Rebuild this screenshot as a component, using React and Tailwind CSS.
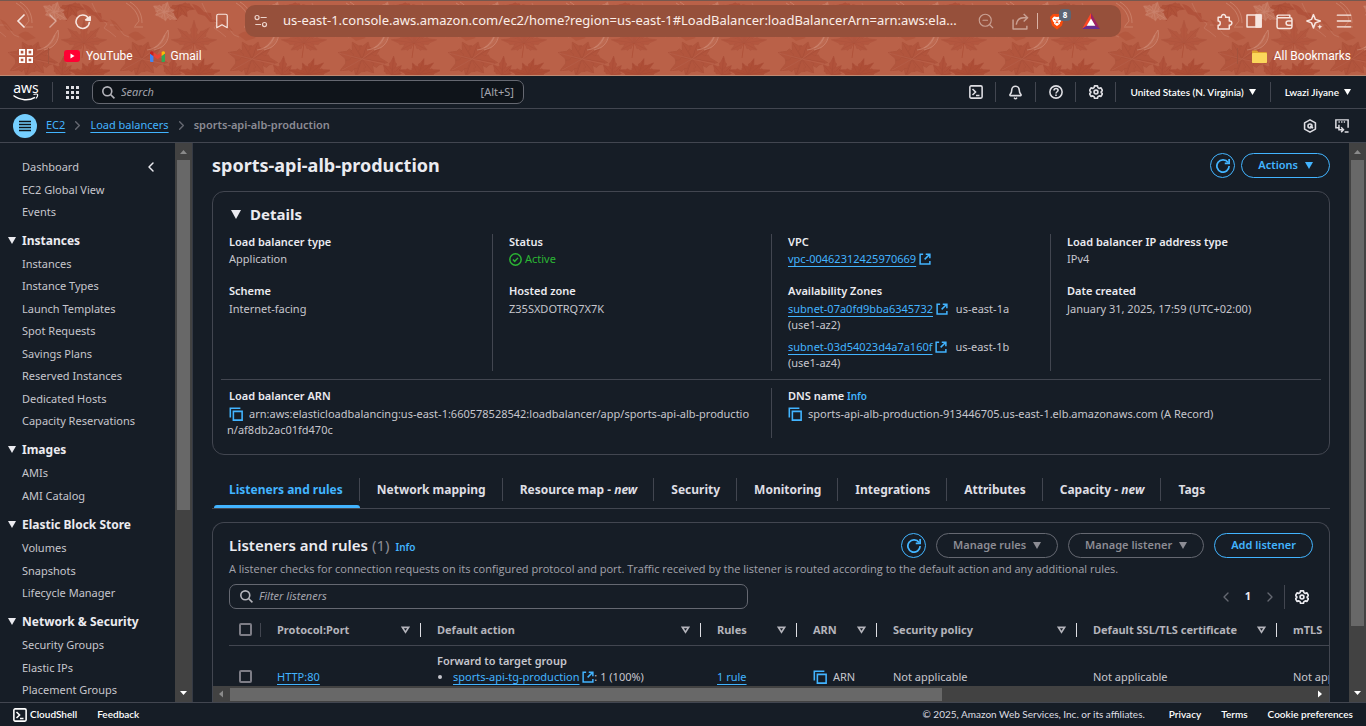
import React from "react";
import { Bell, Bookmark, ChevronLeft, ChevronRight, Menu, ZoomOut } from "lucide-react";

/* ---------- icons ---------- */

const Svg = ({ size = 14, box = 16, w = 2, className = "", children }) => (
  <svg
    width={size}
    height={size}
    viewBox={`0 0 ${box} ${box}`}
    fill="none"
    stroke="currentColor"
    strokeWidth={w}
    strokeLinejoin="round"
    className={`shrink-0 ${className}`}
    aria-hidden="true"
  >
    {children}
  </svg>
);

const RefreshIcon = () => (
  <Svg size={14} className="text-[#42b4ff]">
    <path d="M10 5h5V0" strokeLinejoin="miter" />
    <path d="M15 8a7 7 0 1 1-1.2-3.9" />
  </Svg>
);

const ExternalIcon = () => (
  <Svg size={12} className="inline-block align-[-2px] text-[#42b4ff]">
    <path d="M5.500 1.500h-4v13h13v-4" strokeLinejoin="miter" />
    <path d="M9 1.500h5.500V7M14 2 7.500 8.500" strokeLinejoin="miter" />
  </Svg>
);

const CopyIcon = () => (
  <Svg size={14} w={1.800} className="inline-block align-[-3px] text-[#42b4ff]">
    <path d="M1.500 12V1.500H13" strokeLinejoin="miter" />
    <path d="M5 5h10v10H5z" strokeLinejoin="miter" />
  </Svg>
);

const SearchIcon = () => (
  <Svg size={13} className="text-[#b4b4bb]">
    <circle cx="6.500" cy="6.500" r="5.500" />
    <path d="m10.500 10.500 4.800 4.800" />
  </Svg>
);

const GearIcon = () => (
  <Svg size={14} w={1.9}>
    <path d="M6.300 1h3.400l.5 2 1.500.9 2-.6 1.700 3-1.500 1.400v.9l1.500 1.400-1.700 3-2-.6-1.500.9-.5 1.900H6.300l-.5-1.900-1.500-.9-2 .6-1.700-3 1.500-1.400v-.9L.6 6.300l1.700-3 2 .6L5.800 3z" />
    <circle cx="8" cy="8.100" r="2.200" />
  </Svg>
);

const ShellIcon = () => (
  <Svg size={14} w={1.8}>
    <rect x="1" y="1" width="14" height="14" rx="1.500" />
    <path d="m4 4.500 3.500 3.500L4 11.500M8 12h4" strokeLinejoin="miter" />
  </Svg>
);

const HelpIcon = () => (
  <Svg size={14} w={1.8}>
    <circle cx="8" cy="8" r="7" />
    <path d="M5.700 6.300C5.800 4.800 6.800 4 8.100 4c1.300 0 2.300.8 2.300 2.100C10.400 7.600 8 7.900 8 9.700M8 10.800v1.700" />
  </Svg>
);

const HexIcon = () => (
  <Svg size={14} w={1.8}>
    <path d="M8 1 14.200 4.500v7L8 15l-6.200-3.500v-7z" />
    <circle cx="8" cy="8" r="2.300" />
    <path d="m8 8 3.500 2.500" />
  </Svg>
);

const PanelIcon = () => (
  <Svg size={14} w={1.700}>
    <path d="M5 10H1V1h14v9M4 3.500h1.500M7 3.500h1.500M10 3.500h1.500M11 14.800h4.500" strokeLinejoin="miter" />
    <path d="M4.500 6.500v5.700H9M7 9.500l2.700 2.700L7 15" strokeLinejoin="miter" />
  </Svg>
);

const CheckIcon = () => (
  <Svg size={13} w={1.800} className="text-[#2bb534]">
    <circle cx="8" cy="8" r="7" />
    <path d="m4.800 8 2.300 2.300 4-4.300" />
  </Svg>
);

const Caret = ({ className = "w-[8px] h-[7px]" }) => (
  <svg viewBox="0 0 10 8" preserveAspectRatio="none" className={`shrink-0 ${className}`} fill="currentColor" aria-hidden="true">
    <path d="M0 0h10L5 8z" />
  </svg>
);

const SortIcon = () => (
  <svg width="9" height="8" viewBox="0 0 10 9" fill="none" stroke="currentColor" strokeWidth="1.800" aria-hidden="true">
    <path d="M1.500 1.500h7L5 7z" />
  </svg>
);

const AwsLogo = () => (
  <a href="#home" aria-label="AWS home" className="flex w-[26px] flex-col items-center text-white">
    <span className="text-[14px] leading-[10px]">aws</span>
    <svg width="26" height="8" viewBox="0 0 26 8" fill="none" stroke="#fff" aria-hidden="true">
      <path d="M.5 2.500C7 7.500 16 8 22 4.300" strokeWidth="1.500" />
      <path d="M20.500 1.500c1.800-.5 3.700-.4 4 0s-.2 2.300-1.500 4" strokeWidth="1.200" />
    </svg>
  </a>
);

/* ---------- browser window ---------- */

const Lobes = ({ x, y, r, angles, width = 0.2, fill, opacity, stroke = "none" }) => (
  <g transform={`translate(${x} ${y})`} fill={fill} opacity={opacity} stroke={stroke} strokeWidth=".5">
    {angles.map(([a, k]) => {
      const l = r * k;
      const h = r * width;
      return (
        <g key={a} transform={`rotate(${a})`}>
          <path
            d={`M0 0 Q${l * 0.25} ${-h * 0.5} ${l * 0.35} ${-h} L${l * 0.45} ${-h * 0.75} L${l * 0.6} ${-h} L${l * 0.68} ${-h * 0.55} Q${l * 0.85} ${-h * 0.3} ${l} 0 Q${l * 0.85} ${h * 0.3} ${l * 0.68} ${h * 0.55} L${l * 0.6} ${h} L${l * 0.45} ${h * 0.75} L${l * 0.35} ${h} Q${l * 0.25} ${h * 0.5} 0 0z`}
          />
          <path d={`M0 0H${l * 0.9}`} fill="none" strokeWidth=".7" />
        </g>
      );
    })}
  </g>
);

const LeafBackdrop = () => (
  <svg className="absolute inset-0 h-full w-full" aria-hidden="true">
    <defs>
      <pattern id="leaves" width="110" height="76" patternUnits="userSpaceOnUse">
        <rect width="110" height="76" fill="#ba6148" />
        <Lobes x="84" y="42" r={23} width={0.16} fill="#ad4d35" opacity=".5" stroke="#a04430" angles={[[-90, 1], [-45, 0.95], [-138, 0.95], [-8, 1], [188, 1], [28, 0.65], [152, 0.65]]} />
        <path d="M84 42 82 57" stroke="#a9472f" opacity=".6" />
        <Lobes x="32" y="58" r={26} width={0.25} fill="#aa4a32" opacity=".5" stroke="#963b26" angles={[[-165, 0.95], [-120, 0.75], [-70, 0.7], [-30, 0.8], [8, 1], [50, 0.7], [110, 0.7], [152, 0.95]]} />
        <path d="M32 58 57 38M32 58 9 52M32 58 12 69M32 58l22 5" stroke="#c9765e" strokeWidth=".6" opacity=".5" />
        <Lobes x="88" y="74" r={22} width={0.15} fill="#a43e28" opacity=".55" stroke="#983522" angles={[[-70, 0.8], [-38, 0.9], [-12, 1.1], [-115, 0.6], [-165, 0.9]]} />
        <Lobes x="62" y="74" r={19} width={0.2} fill="#a8442d" opacity=".5" stroke="#983522" angles={[[-85, 1], [-45, 0.7], [-130, 0.7], [-10, 0.5]]} />
        <Lobes x="69" y="4" r={18} width={0.22} fill="#a8442d" opacity=".55" stroke="#983522" angles={[[15, 0.9], [55, 0.8], [100, 0.9], [140, 0.8]]} />
        <path d="M16 2c7 4 12 10 13 18l-4 5M20 1c7 4 12 11 12 21M24 26l9 0" fill="none" stroke="#d08d76" strokeWidth=".9" opacity=".7" />
        <Lobes x="54" y="11" r={15} width={0.25} fill="#c77c64" opacity=".6" stroke="#d79a85" angles={[[-10, 0.7], [30, 1], [80, 0.6], [-150, 0.8], [160, 0.6], [-70, 0.7]]} />
        <path d="M37 49c8-1 14-6 17-14l4-6c2 8-2 15-8 18l-6 2M44 47c6-3 9-7 11-13" fill="#c77b64" fillOpacity=".35" stroke="#d39480" strokeWidth=".8" opacity=".7" />
        <path d="M92 2c4 9 7 15 15 21l-3 4 6 4M0 31l6 5M-6 24l12 0 8 10 5 2" fill="none" stroke="#c9806a" strokeWidth=".8" opacity=".65" />
        <path d="M82 3c7 1 10 5 12 8l7 1 1 6 7 3-9 0-5-6-7-2z" fill="#a8442d" opacity=".5" />
        <path d="M0 18q6 2 8 6l5 6q-7 0-9-5zM18 34q6-5 10-3l8 6-10 3z" fill="#aa4a32" opacity=".4" />
      </pattern>
    </defs>
    <rect width="100%" height="100%" fill="url(#leaves)" />
  </svg>
);

const ToolButton = ({ label, children }) => (
  <button type="button" aria-label={label} className="flex h-6 w-[30px] items-center justify-center text-[#f7e6e0]">
    {children}
  </button>
);

const BrowserChrome = () => (
  <header className="relative border-t border-b border-t-[#75584f] border-b-[#c08a72] bg-[#ba6148] text-white">
    <LeafBackdrop />
    <div className="relative flex h-[40px] items-center pl-[7px] pr-[7px]">
      <ToolButton label="Back"><Svg size={16} w={1.6}><path d="M10.500 1.500 4 8l6.500 6.500" strokeLinejoin="miter" /></Svg></ToolButton>
      <ToolButton label="Forward"><Svg size={16} w={1.4} className="opacity-50"><path d="M5.500 1.500 12 8l-6.500 6.500" strokeLinejoin="miter" /></Svg></ToolButton>
      <ToolButton label="Reload">
        <Svg size={17} w={1.5}><path d="M14.500 8.500a6.300 6.300 0 1 1-1.200-4" /><path d="M11 6.500 15.200 7V3.500z" fill="currentColor" /></Svg>
      </ToolButton>
      <div className="flex w-[148px] justify-end pr-[14px]">
        <button type="button" aria-label="Bookmark this page" className="text-[#f7e6e0]"><Bookmark size={18} strokeWidth={1.6} /></button>
      </div>
      <div className="flex h-8 min-w-0 flex-1 items-center rounded-[10px] bg-[#96503b] pl-[9px] pr-[21px]">
        <Svg size={14} w={1.400} className="text-[#ecd3cb]"><circle cx="3.500" cy="4" r="2.300" /><path d="M7.500 4h7M1.500 12H8" /><circle cx="12" cy="12" r="2.300" /></Svg>
        <input
          aria-label="Address"
          className="ml-[15px] min-w-0 flex-1 bg-transparent text-[13px] text-[#fbeee9] outline-none"
          defaultValue="us-east-1.console.aws.amazon.com/ec2/home?region=us-east-1#LoadBalancer:loadBalancerArn=arn:aws:ela..."
        />
        <button type="button" aria-label="Zoom" className="flex w-[34px] justify-center text-[#c9a093]"><ZoomOut size={18} strokeWidth={1.5} /></button>
        <button type="button" aria-label="Share" className="flex w-[34px] justify-center text-[#c9a093]">
          <Svg size={17} w={1.4}><path d="M1 6v9h13v-3M4 11c.5-4 3-6.500 7-6.500h3.500M11 1l3.700 3.500L11 8" /></Svg>
        </button>
        <span className="h-4 w-px bg-[#d9b3a6]" />
        <button type="button" aria-label="Brave Shields, 8 blocked" className="relative ml-[11px] flex w-4">
          <svg width="16" height="17" viewBox="0 0 16 17" aria-hidden="true">
            <path d="M4 1h8l1.500 1.500L15 4l-.6 2.500L13 12.500 8 16.500 3 12.500 1.600 6.500 1 4l1.500-1.500z" fill="#fb4b0b" />
            <path d="M5 3.500 8 4l3-.5 2 2.200-1.300 3-1 .8.3 1.200L8 13l-3-2.300.3-1.200-1-.8L3 5.700z" fill="#fff" />
            <path d="m5 6.300 1.800.7M11 6.300 9.200 7M8 6.500v3M6.500 10l1.500-.6 1.500.6" stroke="#fb4b0b" fill="none" />
          </svg>
          <span className="absolute -top-[4px] left-[10px] flex h-[12px] w-[12px] items-center justify-center rounded-[4px] bg-[#5d6573] text-[8px] font-bold text-white">8</span>
        </button>
        <button type="button" aria-label="Brave Rewards" className="ml-[17px]">
          <svg width="18" height="16" viewBox="0 0 18 16" aria-hidden="true">
            <path d="M9 0v6L5 12.500 0 16z" fill="#ff4724" /><path d="M9 0v6l4 6.500L18 16z" fill="#9e1f63" /><path d="M0 16h18l-5-3.500H5z" fill="#662d91" /><path d="m9 5.500 4.300 7.200H4.700z" fill="#fff" />
          </svg>
        </button>
      </div>
      <div className="flex pl-[88px]">
        <ToolButton label="Extensions">
          <Svg size={17} w={1.400}><path d="M2 4h3.200a2 2 0 1 1 3.800 0h3.500v3.500a2 2 0 1 1 0 3.900V15H2v-3.400a2 2 0 0 0 0-4z" /></Svg>
        </ToolButton>
        <ToolButton label="Sidebar"><Svg size={16} w={1.5}><path d="M1 2h14v12H1z" /><path d="M10 2h5v12h-5z" fill="currentColor" /></Svg></ToolButton>
        <ToolButton label="Wallet"><Svg size={17} w={1.400}><path d="M1 4.500V13a1.500 1.500 0 0 0 1.500 1.500h11A1.500 1.500 0 0 0 15 13V6a1.500 1.500 0 0 0-1.500-1.500h-12C.5 3.500 1 2 2.500 2H13v2.500M15 7.500h-3.500a2 2 0 0 0 0 4H15" /></Svg></ToolButton>
        <ToolButton label="Leo AI"><Svg size={17} w={1.400}><path d="M7 1.500 8.800 6l4.700 1.500L8.800 9.300 7 14 5.200 9.300.8 7.500 5.200 6z" /><path d="m13 10.500.7 1.800 1.800.7-1.800.7-.7 1.800-.7-1.800-1.800-.7 1.800-.7z" fill="currentColor" stroke="none" /></Svg></ToolButton>
        <ToolButton label="Menu"><Menu size={20} strokeWidth={1.600} /></ToolButton>
      </div>
    </div>
    <nav aria-label="Bookmarks" className="relative flex h-[34px] items-center pb-1 pl-[19px] pr-[15px] font-['Roboto','Open_Sans',sans-serif] text-[12px] leading-4">
      <button type="button" aria-label="Tab groups">
        <Svg size={14} w={2}><path d="M1 1h5v5H1zM10 1h5v5h-5zM1 10h5v5H1zM10 10h5v5h-5z" strokeLinejoin="miter" /></Svg>
      </button>
      <span className="ml-[15px] h-4 w-px bg-[#a4533d]" />
      <a href="#youtube" className="ml-[15px] flex items-center gap-[6px]">
        <svg width="16" height="12" viewBox="0 0 16 12" aria-hidden="true"><rect width="16" height="12" rx="3" fill="#ff0033" /><path d="m6.500 3.500 4 2.500-4 2.500z" fill="#fff" /></svg>
        YouTube
      </a>
      <a href="#gmail" className="ml-[17px] flex items-center gap-[6px]">
        <svg width="15" height="11" viewBox="0 0 15 11" aria-hidden="true">
          <path d="M0 2.500 3.400 5v6H1a1 1 0 0 1-1-1z" fill="#4285f4" />
          <path d="M15 2.500 11.600 5v6H14a1 1 0 0 0 1-1z" fill="#34a853" />
          <path d="M3.400 1 7.500 4.200 11.600 1v4L7.500 8.200 3.400 5z" fill="#ea4335" />
          <path d="M11.600 1C13-.5 15 0 15 2v.5L11.600 5z" fill="#fbbc04" />
          <path d="M3.400 1C2-.5 0 0 0 2v.5L3.400 5z" fill="#c5221f" />
        </svg>
        Gmail
      </a>
      <span className="ml-auto h-4 w-px bg-[#a4533d]" />
      <a href="#bookmarks" className="ml-[14px] flex items-center gap-[7px]">
        <svg width="15" height="13" viewBox="0 0 15 13" aria-hidden="true"><path d="M0 1.500A1 1 0 0 1 1 .5h4L6.500 2H14a1 1 0 0 1 1 1v9a1 1 0 0 1-1 1H1a1 1 0 0 1-1-1z" fill="#e0a52e" /><path d="M0 4a1 1 0 0 1 1-1h13a1 1 0 0 1 1 1v8a1 1 0 0 1-1 1H1a1 1 0 0 1-1-1z" fill="#fbd75b" /></svg>
        All Bookmarks
      </a>
    </nav>
  </header>
);

/* ---------- console chrome ---------- */

const NavIcon = ({ label, children }) => (
  <button type="button" aria-label={label} className="flex h-5 w-10 items-center justify-center border-r border-[#424650] text-[#dedee3]">
    {children}
  </button>
);

const ConsoleNav = () => (
  <div className="flex h-[33px] shrink-0 items-center border-b border-[#424650] pl-[13px] pr-[15px]">
    <AwsLogo />
    <span className="ml-[13px] h-5 w-px bg-[#424650]" />
    <button type="button" aria-label="Services" className="ml-[13px] text-[#dedee3]">
      <svg width="13" height="13" viewBox="0 0 13 13" fill="currentColor" aria-hidden="true"><path d="M0 0h3v3H0zM5 0h3v3H5zM10 0h3v3h-3zM0 5h3v3H0zM5 5h3v3H5zM10 5h3v3h-3zM0 10h3v3H0zM5 10h3v3H5zM10 10h3v3h-3z" /></svg>
    </button>
    <label className="ml-[13px] flex h-6 w-[432px] items-center rounded-[7px] border border-[#656871] bg-[#0f141a] px-[9px]">
      <SearchIcon />
      <input aria-label="Search" placeholder="Search" className="ml-[6px] min-w-0 flex-1 bg-transparent text-[11px] text-[#dedee3] outline-none placeholder:italic placeholder:text-[#a4a4ad]" />
      <span className="text-[11px] text-[#a4a4ad]">[Alt+S]</span>
    </label>
    <div className="ml-auto flex items-center font-['Lato','Open_Sans',sans-serif] text-[10px] font-semibold text-white">
      <NavIcon label="CloudShell"><ShellIcon /></NavIcon>
      <NavIcon label="Notifications"><Bell size={15} strokeWidth={2.500} /></NavIcon>
      <NavIcon label="Support"><HelpIcon /></NavIcon>
      <NavIcon label="Settings"><GearIcon /></NavIcon>
      <button type="button" className="flex h-5 items-center gap-[5px] border-r border-[#424650] px-[14px]">
        United States (N. Virginia) <Caret className="h-[6px] w-[7px]" />
      </button>
      <button type="button" className="flex h-5 items-center gap-[5px] pl-[14px]">
        Lwazi Jiyane <Caret className="h-[6px] w-[7px]" />
      </button>
    </div>
  </div>
);

const LINK = "text-[#42b4ff] underline underline-offset-[3px]";

const Breadcrumbs = () => (
  <div className="flex h-[34px] shrink-0 items-center border-b border-[#424650] pl-[13px] pr-[17px] text-[11px]">
    <button type="button" aria-label="Open navigation" className="flex h-6 w-6 items-center justify-center rounded-full bg-[#75cfff] text-[#0f141a]">
      <Svg size={12} box={12} w={1.500}><path d="M0 1.500h12M0 4.500h12M0 7.500h12M0 10.500h12" /></Svg>
    </button>
    <nav aria-label="Breadcrumb" className="ml-[9px] flex items-center gap-[5px]">
      <a href="#ec2" className={LINK}>EC2</a>
      <ChevronRight size={15} strokeWidth={2.200} className="text-[#656871]" />
      <a href="#load-balancers" className={LINK}>Load balancers</a>
      <ChevronRight size={15} strokeWidth={2.200} className="text-[#656871]" />
      <span className="font-semibold text-[#8c8c94]">sports-api-alb-production</span>
    </nav>
    <div className="ml-auto flex items-center gap-[18px] text-[#dedee3]">
      <button type="button" aria-label="Resource explorer"><HexIcon /></button>
      <button type="button" aria-label="Split panel"><PanelIcon /></button>
    </div>
  </div>
);

const MENU = [
  { title: "Instances", items: ["Instances", "Instance Types", "Launch Templates", "Spot Requests", "Savings Plans", "Reserved Instances", "Dedicated Hosts", "Capacity Reservations"], height: "h-[179px]" },
  { title: "Images", items: ["AMIs", "AMI Catalog"], height: "h-[45px]" },
  { title: "Elastic Block Store", items: ["Volumes", "Snapshots", "Lifecycle Manager"], height: "h-[67px]" },
  { title: "Network & Security", items: ["Security Groups", "Elastic IPs", "Placement Groups"], height: "h-[67px]" },
];

const MenuList = ({ items, height }) => (
  <ul className={`flex flex-col justify-between pl-[22px] text-[11px] leading-[22px] text-[#c6c6cd] ${height}`}>
    {items.map((item) => (
      <li key={item}><a href={`#${item}`}>{item}</a></li>
    ))}
  </ul>
);

const VScroll = ({ className = "", thumb }) => (
  <div className={`flex w-[17px] shrink-0 flex-col items-center bg-[#424242] ${className}`} aria-hidden="true">
    <svg width="17" height="17" viewBox="0 0 17 17" className="shrink-0"><path d="M5 11h7L8.500 7z" fill="#8a8a8a" /></svg>
    <div className={`w-[13px] bg-[#686868] ${thumb}`} />
    <svg width="17" height="17" viewBox="0 0 17 17" className="mt-auto shrink-0"><path d="M5 6h7l-3.500 4z" fill="#fff" /></svg>
  </div>
);

const Sidebar = () => (
  <aside className="flex w-[193px] shrink-0 border-r border-[#353a44]">
    <nav aria-label="EC2" className="flex min-w-0 flex-1 flex-col gap-[5px] overflow-hidden pt-[13px]">
      <div className="flex items-start justify-between">
        <MenuList items={["Dashboard", "EC2 Global View", "Events"]} height="h-[67px]" />
        <button type="button" aria-label="Collapse navigation" className="mr-4 mt-[3px] text-[#ebebf0]"><ChevronLeft size={16} strokeWidth={2.200} /></button>
      </div>
      {MENU.map(({ title, items, height }) => (
        <section key={title}>
          <h3>
            <button type="button" className="flex h-[25px] items-center gap-[6px] pl-2 text-[12px] font-bold text-[#ebebf0]">
              <Caret />
              {title}
            </button>
          </h3>
          <MenuList items={items} height={height} />
        </section>
      ))}
    </nav>
    <VScroll thumb="h-[350px]" />
  </aside>
);

/* ---------- details ---------- */

const Pill = ({ muted, children }) => (
  <button
    type="button"
    disabled={muted}
    className={`flex h-[25px] items-center gap-[7px] rounded-full border px-4 text-[11px] font-semibold ${muted ? "border-[#656871] text-[#8c8c94]" : "border-[#42b4ff] text-[#42b4ff]"}`}
  >
    {children}
  </button>
);

const RoundRefresh = () => (
  <button type="button" aria-label="Refresh" className="flex h-[25px] w-[25px] items-center justify-center rounded-full border border-[#42b4ff]">
    <RefreshIcon />
  </button>
);

const Field = ({ label, tight, children }) => (
  <div>
    <dt className="font-semibold text-[#ebebf0]">{label}</dt>
    <dd className={tight ? "mt-px mb-px" : "mt-[2px]"}>{children}</dd>
  </div>
);

const Column = ({ first, children }) => (
  <dl className={`flex flex-col gap-[15px] px-4 ${first ? "" : "border-l border-[#424650]"}`}>{children}</dl>
);

const Details = () => (
  <section className="mt-[13px] shrink-0 rounded-xl border border-[#424650] pb-4">
    <button type="button" className="flex h-[42px] items-center gap-[9px] pl-[18px] pt-[3px] text-[15px] font-bold text-[#ebebf0]">
      <Caret className="h-[9px] w-[10px]" /> Details
    </button>
    <div className="grid grid-cols-4 text-[11px] leading-4 text-[#c6c6cd]">
      <Column first>
        <Field tight label="Load balancer type">Application</Field>
        <Field label="Scheme">Internet-facing</Field>
      </Column>
      <Column>
        <Field tight label="Status"><span className="flex items-center gap-[3px] text-[#2bb534]"><CheckIcon />Active</span></Field>
        <Field label="Hosted zone">Z35SXDOTRQ7X7K</Field>
      </Column>
      <Column>
        <Field tight label="VPC"><a href="#vpc" className={LINK}>vpc-00462312425970669</a> <ExternalIcon /></Field>
        <Field label="Availability Zones">
          <p><a href="#subnet-a" className={LINK}>subnet-07a0fd9bba6345732</a> <ExternalIcon /><span className="ml-2">us-east-1a</span><br />(use1-az2)</p>
          <p className="mt-[6px]"><a href="#subnet-b" className={LINK}>subnet-03d54023d4a7a160f</a> <ExternalIcon /><span className="ml-2">us-east-1b</span><br />(use1-az4)</p>
        </Field>
      </Column>
      <Column>
        <Field tight label="Load balancer IP address type">IPv4</Field>
        <Field label="Date created">January 31, 2025, 17:59 (UTC+02:00)</Field>
      </Column>
    </div>
    <hr className="mx-2 my-2 border-[#424650]" />
    <div className="grid grid-cols-2 text-[11px] leading-4 text-[#c6c6cd]">
      <Column first>
        <Field label="Load balancer ARN">
          <span className="-ml-[2px] block break-all"><span className="ml-[2px] mr-[6px]"><CopyIcon /></span>arn:aws:elasticloadbalancing:us-east-1:660578528542:loadbalancer/app/sports-api-alb-production/af8db2ac01fd470c</span>
        </Field>
      </Column>
      <Column>
        <Field label={<>DNS name <a href="#info" className="text-[10px] text-[#42b4ff]">Info</a></>}>
          <span className="mr-[6px]"><CopyIcon /></span>sports-api-alb-production-913446705.us-east-1.elb.amazonaws.com (A Record)
        </Field>
      </Column>
    </div>
  </section>
);

/* ---------- tabs and listeners ---------- */

const TABS = ["Listeners and rules", "Network mapping", ["Resource map - ", "new"], "Security", "Monitoring", "Integrations", "Attributes", ["Capacity - ", "new"], "Tags"];

const Tabs = () => (
  <div role="tablist" className="mt-[17px] flex h-[37px] shrink-0 border-b border-[#424650] text-[12px] font-bold text-[#dedee3]">
    {TABS.map((tab, i) => (
      <button
        key={i}
        type="button"
        role="tab"
        aria-selected={i === 0}
        className={`flex flex-col ${i === 0 ? "text-[#42b4ff]" : ""}`}
      >
        <span className={`mt-[6px] flex h-[23px] items-center whitespace-pre border-[#424650] pl-[17px] pr-4 ${i < TABS.length - 1 ? "border-r" : ""}`}>
          {Array.isArray(tab) ? <>{tab[0]}<em>{tab[1]}</em></> : tab}
        </span>
        {i === 0 && <span className="mt-auto ml-[2px] h-[3px] self-stretch rounded-t bg-[#42b4ff]" />}
      </button>
    ))}
  </div>
);

const COLUMNS = [
  ["Protocol:Port", "w-[160px]"],
  ["Default action", "w-[280px]"],
  ["Rules", "w-[96px]"],
  ["ARN", "w-[80px]"],
  ["Security policy", "w-[200px]"],
  ["Default SSL/TLS certificate", "w-[200px]"],
  ["mTLS", "w-[120px]"],
];

const Check = ({ label }) => (
  <input type="checkbox" aria-label={label} className="block h-[13px] w-[13px] appearance-none rounded-[2px] border-2 border-[#7d7d86]" />
);

const ListenerTable = () => (
  <table className="ml-4 mt-[6px] w-[1168px] table-fixed border-collapse text-left text-[11px] leading-4 text-[#c6c6cd]">
    <thead>
      <tr className="h-[30px] border-b border-[#424650] text-[#b4b4bb]">
        <th className="w-[32px] p-0">
          <div className="flex h-[14px] items-center border-r border-[#424650] pl-[10px]"><Check label="Select all listeners" /></div>
        </th>
        {COLUMNS.map(([name, width]) => (
          <th key={name} className={`p-0 font-bold ${width}`}>
            <div className="flex h-[14px] items-center justify-between whitespace-nowrap border-r border-[#dedee3] pl-4 pr-[10px]">
              {name} <SortIcon />
            </div>
          </th>
        ))}
      </tr>
    </thead>
    <tbody>
      <tr className="align-bottom">
        <td className="p-0 pb-[2px] pl-[10px]"><Check label="Select HTTP:80" /></td>
        <td className="pl-4"><a href="#http" className={LINK}>HTTP:80</a></td>
        <td className="whitespace-nowrap pl-4 pt-[7px]">
          <div className="font-semibold">Forward to target group</div>
          <ul className="list-disc pl-4"><li><a href="#target-group" className={LINK}>sports-api-tg-production</a> <ExternalIcon />: 1 (100%)</li></ul>
        </td>
        <td className="pl-4"><a href="#rules" className={LINK}>1 rule</a></td>
        <td className="whitespace-nowrap pl-4"><button type="button" className="flex items-center gap-[6px]"><CopyIcon />ARN</button></td>
        <td className="pl-4">Not applicable</td>
        <td className="pl-4">Not applicable</td>
        <td className="pl-4">Not applicable</td>
      </tr>
    </tbody>
  </table>
);

const Listeners = () => (
  <section className="mt-[13px] flex min-h-0 flex-1 flex-col overflow-hidden rounded-t-xl border border-b-0 border-[#424650]">
    <div className="flex shrink-0 items-center px-4 pt-[10px]">
      <h2 className="text-[15px] font-semibold text-[#ebebf0]">Listeners and rules <span className="font-normal text-[#8c8c94]">(1)</span></h2>
      <a href="#info" className="ml-[6px] mt-[3px] text-[10px] font-semibold text-[#42b4ff]">Info</a>
      <div className="ml-auto flex items-center gap-[10px]">
        <RoundRefresh />
        <Pill muted>Manage rules <Caret /></Pill>
        <Pill muted>Manage listener <Caret /></Pill>
        <Pill>Add listener</Pill>
      </div>
    </div>
    <p className="mt-[3px] shrink-0 px-4 font-['Open_Sans','Noto_Sans',sans-serif] text-[11px] leading-4 text-[#a4a4ad]">
      A listener checks for connection requests on its configured protocol and port. Traffic received by the listener is routed according to the default action and any additional rules.
    </p>
    <div className="mt-[7px] flex shrink-0 items-center pl-4 pr-5">
      <label className="flex h-[25px] w-[519px] items-center rounded-[7px] border border-[#656871] px-[10px]">
        <SearchIcon />
        <input aria-label="Filter listeners" placeholder="Filter listeners" className="ml-[6px] min-w-0 flex-1 bg-transparent text-[11px] text-[#dedee3] outline-none placeholder:italic placeholder:text-[#a4a4ad]" />
      </label>
      <div className="ml-auto flex items-center text-[11px] font-bold text-[#ebebf0]">
        <button type="button" aria-label="Previous page" className="text-[#656871]"><ChevronLeft size={16} /></button>
        <span className="w-[28px] text-center">1</span>
        <button type="button" aria-label="Next page" className="text-[#656871]"><ChevronRight size={16} /></button>
        <span className="ml-[6px] h-6 w-px bg-[#424650]" />
        <button type="button" aria-label="Preferences" className="ml-[10px]"><GearIcon /></button>
      </div>
    </div>
    <div className="min-h-0 flex-1 overflow-hidden">
      <ListenerTable />
    </div>
    <div className="flex h-4 shrink-0 items-center bg-[#424242]" aria-hidden="true">
      <svg width="17" height="16" viewBox="0 0 17 16"><path d="M10 4.500v7L6 8z" fill="#8a8a8a" /></svg>
      <div className="h-[13px] w-[712px] bg-[#686868]" />
      <svg width="17" height="16" viewBox="0 0 17 16" className="ml-auto"><path d="M6 4.500v7L10 8z" fill="#fff" /></svg>
    </div>
  </section>
);

const Footer = () => (
  <footer className="flex h-6 shrink-0 items-center border-t border-[#424650] pl-[13px] pr-[13px] font-['Lato','Open_Sans',sans-serif] text-[10px] text-white">
    <button type="button" className="flex items-center gap-[3px] font-semibold"><ShellIcon />CloudShell</button>
    <a href="#feedback" className="ml-5 font-semibold">Feedback</a>
    <span className="ml-auto text-[#dedee3]">© 2025, Amazon Web Services, Inc. or its affiliates.</span>
    <nav aria-label="Legal" className="ml-6 flex gap-5 font-semibold">
      <a href="#privacy">Privacy</a>
      <a href="#terms">Terms</a>
      <a href="#cookies">Cookie preferences</a>
    </nav>
  </footer>
);

export default function App() {
  return (
    <div className="flex h-screen flex-col overflow-hidden bg-[#161d26] font-['Noto_Sans','Open_Sans',sans-serif] text-[#c6c6cd]">
      <BrowserChrome />
      <ConsoleNav />
      <Breadcrumbs />
      <div className="flex min-h-0 flex-1">
        <Sidebar />
        <main className="flex min-w-0 flex-1 flex-col px-[19px] pt-[10px]">
          <div className="flex shrink-0 items-center gap-[6px]">
            <h1 className="mr-auto text-[18px] leading-[25px] font-bold text-[#ebebf0]">sports-api-alb-production</h1>
            <RoundRefresh />
            <Pill>Actions <Caret /></Pill>
          </div>
          <Details />
          <Tabs />
          <Listeners />
        </main>
        <VScroll thumb="h-[466px]" />
      </div>
      <Footer />
    </div>
  );
}
